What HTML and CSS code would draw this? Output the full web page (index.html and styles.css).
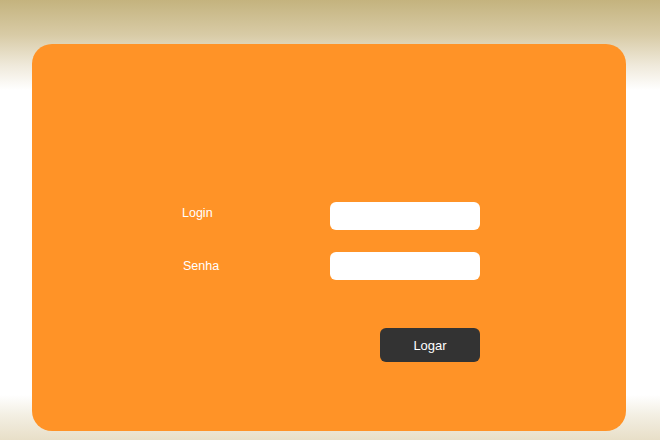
FILE: index.html
```html
<!DOCTYPE html>
<html lang="pt">
<head>
<meta charset="utf-8">
<title>Login</title>
<link rel="stylesheet" href="styles.css">
</head>
<body>
<div class="page">
  <form class="panel">
    <div class="grid">
      <label class="label label-login" for="login">Login</label>
      <input class="field" id="login" type="text">
      <label class="label label-senha" for="senha">Senha</label>
      <input class="field" id="senha" type="password">
      <button class="btn" type="button">Logar</button>
    </div>
  </form>
</div>
</body>
</html>
```

FILE: styles.css
```css
html, body {
  margin: 0;
  padding: 0;
  height: 100%;
}
body {
  font-family: "Liberation Sans", Arial, Helvetica, sans-serif;
  background:
    linear-gradient(to bottom, #c4b37e 0px, #d8cba6 35px, #efe9da 65px, #ffffff 90px) top / 100% 90px no-repeat,
    linear-gradient(to bottom, #ffffff 0px, #f3efe3 20px, #e8dfc8 45px) bottom / 100% 45px no-repeat,
    #ffffff;
}
.page {
  padding: 44px 34px 0 32px;
}
.panel {
  margin: 0;
  height: 387px;
  background: #ff9327;
  border-radius: 20px;
  padding: 158px 0 0 150px;
  box-sizing: border-box;
}
.grid {
  display: grid;
  grid-template-columns: 148px 150px;
  grid-template-rows: 28px 28px;
  row-gap: 22px;
}
.label {
  color: #ffffff;
  font-size: 12.5px;
  line-height: 14px;
  align-self: start;
}
.label-login { margin-top: 4px; }
.label-senha { margin-top: 7px; padding-left: 1px; }
.field {
  border: none;
  border-radius: 6px;
  background: #ffffff;
  height: 28px;
  width: 150px;
  box-sizing: border-box;
  padding: 0 8px;
  margin: 0;
  outline: none;
}
.btn {
  grid-column: 2;
  justify-self: end;
  margin-top: 26px;
  width: 100px;
  height: 34px;
  border: none;
  border-radius: 6px;
  background: #333333;
  color: #ffffff;
  font-family: "Liberation Sans", Arial, Helvetica, sans-serif;
  font-size: 13px;
  padding: 0;
  cursor: pointer;
}
```
